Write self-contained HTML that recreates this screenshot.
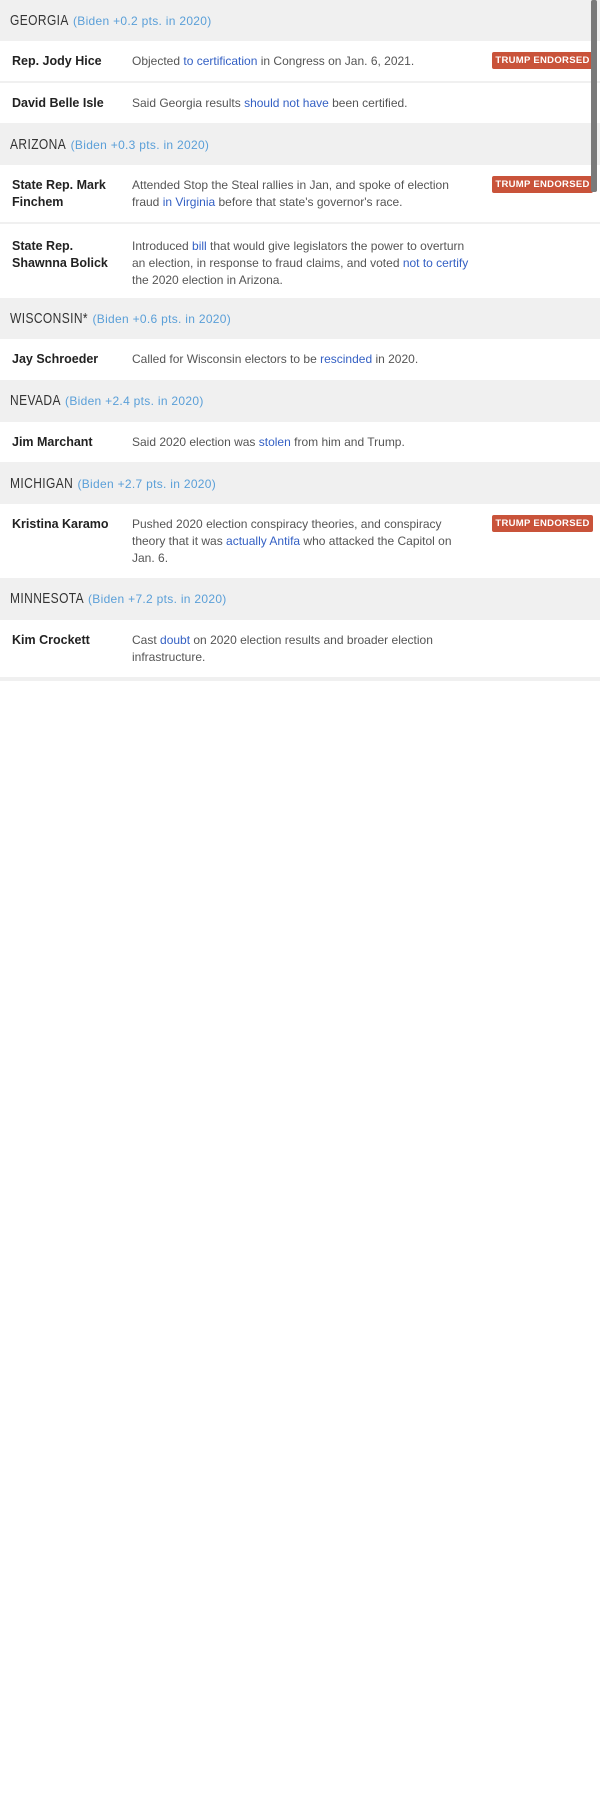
<!DOCTYPE html>
<html><head><meta charset="utf-8"><style>
body{margin:0;width:600px;height:1812px;background:#fff;font-family:"Liberation Sans",Arial,sans-serif;position:relative;overflow:hidden}
.h{background:#f0f0f0;height:41px;line-height:41px;padding-left:10px;color:#333;white-space:nowrap}
.h b{font-weight:normal;display:inline-block;font-size:15px;letter-spacing:0.5px;transform:scaleX(0.8);transform-origin:left}
.h span{color:#5a9fd8;font-size:12px;letter-spacing:0.3px}
.r{position:relative;box-sizing:border-box}
.n{position:absolute;left:12px;top:12px;width:110px;font-weight:bold;font-size:12.5px;color:#222;line-height:17px}
.d{position:absolute;left:132px;top:12px;width:340px;font-size:12px;color:#555;line-height:17px}
.d a{color:#3460c4;text-decoration:none}
.b{position:absolute;left:492px;top:11px;width:101px;height:17px;background:#c9533a;color:#fff;font-weight:bold;font-size:9.5px;line-height:17px;text-align:center;border-radius:2px;letter-spacing:0.3px;white-space:nowrap}
.g{height:2px;background:#f0f0f0}
.sb{position:absolute;left:591px;top:0;width:6px;height:192px;background:#7a7a7a;border-radius:2px}
</style></head><body>
<div class="h"><b style="margin-right:-15px">GEORGIA</b> <span>(Biden +0.2 pts. in 2020)</span></div>
<div class="r" style="height:40px"><div class="n">Rep. Jody Hice</div><div class="d">Objected <a>to certification</a> in Congress on Jan. 6, 2021.</div><div class="b">TRUMP ENDORSED</div></div>
<div class="g"></div>
<div class="r" style="height:40px"><div class="n">David Belle Isle</div><div class="d">Said Georgia results <a>should not have</a> been certified.</div></div>
<div class="h" style="height:42px;line-height:43px"><b style="margin-right:-14px">ARIZONA</b> <span>(Biden +0.3 pts. in 2020)</span></div>
<div class="r" style="height:57px"><div class="n">State Rep. Mark Finchem</div><div class="d">Attended Stop the Steal rallies in Jan, and spoke of election fraud <a>in Virginia</a> before that state's governor's race.</div><div class="b">TRUMP ENDORSED</div></div>
<div class="g"></div>
<div class="r" style="height:74px"><div class="n" style="top:14px">State Rep. Shawnna Bolick</div><div class="d" style="top:14px">Introduced <a>bill</a> that would give legislators the power to overturn an election, in response to fraud claims, and voted <a>not to certify</a> the 2020 election in Arizona.</div></div>
<div class="h"><b style="margin-right:-19.5px">WISCONSIN*</b> <span>(Biden +0.6 pts. in 2020)</span></div>
<div class="r" style="height:41px"><div class="n">Jay Schroeder</div><div class="d">Called for Wisconsin electors to be <a>rescinded</a> in 2020.</div></div>
<div class="h" style="height:42px;line-height:42px"><b style="margin-right:-13px">NEVADA</b> <span>(Biden +2.4 pts. in 2020)</span></div>
<div class="r" style="height:40px"><div class="n">Jim Marchant</div><div class="d">Said 2020 election was <a>stolen</a> from him and Trump.</div></div>
<div class="h" style="height:42px;line-height:43px"><b style="margin-right:-16px">MICHIGAN</b> <span>(Biden +2.7 pts. in 2020)</span></div>
<div class="r" style="height:74px"><div class="n">Kristina Karamo</div><div class="d">Pushed 2020 election conspiracy theories, and conspiracy theory that it was <a>actually Antifa</a> who attacked the Capitol on Jan. 6.</div><div class="b">TRUMP ENDORSED</div></div>
<div class="h" style="height:42px;line-height:42px"><b style="margin-right:-19px">MINNESOTA</b> <span>(Biden +7.2 pts. in 2020)</span></div>
<div class="r" style="height:57px"><div class="n">Kim Crockett</div><div class="d">Cast <a>doubt</a> on 2020 election results and broader election infrastructure.</div></div>
<div class="g" style="height:4px"></div>
<div class="sb"></div>
</body></html>
